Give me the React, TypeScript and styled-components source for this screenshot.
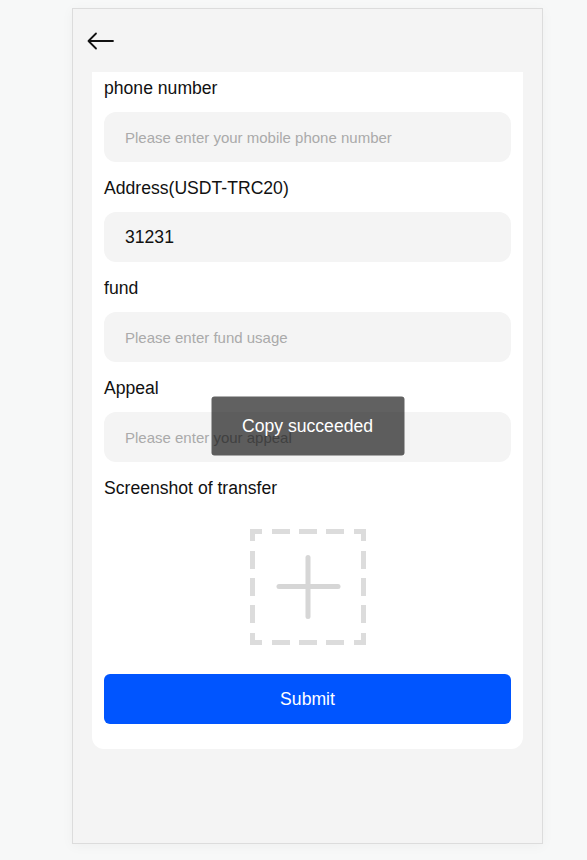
import React from "react";
import styled, { createGlobalStyle } from "styled-components";

const Global = createGlobalStyle`
  html, body {
    margin: 0;
    padding: 0;
    background: #f7f8f8;
    font-family: "Liberation Sans", Arial, sans-serif;
  }
  * { box-sizing: border-box; }
`;

const Page = styled.div`
  padding: 8px 0 16px 72px;
`;

const Frame = styled.div`
  position: relative;
  width: 471px;
  height: 836px;
  background: #f4f4f4;
  border: 1px solid #dcdcdc;
  box-shadow: 0 2px 12px rgba(0, 0, 0, 0.04);
  display: flex;
  flex-direction: column;
`;

const Header = styled.div`
  height: 63px;
  display: flex;
  align-items: center;
  padding-left: 13px;
  padding-top: 1px;
`;

const BackButton = styled.button`
  border: 0;
  background: transparent;
  padding: 0;
  width: 28px;
  height: 20px;
  display: flex;
  align-items: center;
  cursor: pointer;
`;

const Card = styled.div`
  margin: 0 19px 0 19px;
  background: #ffffff;
  border-radius: 0 0 12px 12px;
  padding: 0 12px 25px 12px;
  display: flex;
  flex-direction: column;
`;

const Label = styled.div`
  font-size: 17.6px;
  line-height: 30px;
  padding-top: 1px;
  height: 30px;
  color: #111;
  margin-bottom: 10px;
`;

const Field = styled.input`
  height: 50px;
  border: 0;
  outline: none;
  border-radius: 12px;
  background: #f4f4f4;
  padding: 0 21px;
  font-family: "Liberation Sans", Arial, sans-serif;
  font-size: 17.6px;
  color: #111;
  margin-bottom: 10px;
  width: 100%;
  &::placeholder {
    color: #aaaaaa;
    font-size: 15px;
  }
`;

const UploadArea = styled.div`
  display: flex;
  justify-content: center;
  padding-top: 17px;
  margin-bottom: 29px;
`;

const UploadBox = styled.div`
  width: 116px;
  height: 116px;
  cursor: pointer;
`;

const SubmitButton = styled.button`
  height: 50px;
  border: 0;
  border-radius: 6px;
  background: #0055ff;
  color: #ffffff;
  font-family: "Liberation Sans", Arial, sans-serif;
  font-size: 17.6px;
  cursor: pointer;
`;

const Toast = styled.div`
  position: absolute;
  left: 50%;
  top: 50%;
  transform: translate(-50%, -50%);
  width: 193px;
  height: 59px;
  border-radius: 3px;
  background: rgba(0, 0, 0, 0.62);
  color: #fff;
  font-size: 17.6px;
  display: flex;
  align-items: center;
  justify-content: center;
`;

const BackArrow = () => (
  <svg width="28" height="20" viewBox="0 0 28 20" fill="none">
    <path d="M27 10H2.5M10 2.5L2.5 10L10 17.5" stroke="#111" strokeWidth="1.8" strokeLinecap="round" strokeLinejoin="round" />
  </svg>
);

const dash = "12 10 18 9 18 9 18 10 12";

const UploadIcon = () => (
  <svg width="116" height="116" viewBox="0 0 116 116" fill="none">
    <g stroke="#dcdcdc" strokeWidth="5" strokeDasharray={dash}>
      <line x1="0" y1="2.5" x2="116" y2="2.5" />
      <line x1="0" y1="113.5" x2="116" y2="113.5" />
      <line x1="2.5" y1="0" x2="2.5" y2="116" />
      <line x1="113.5" y1="0" x2="113.5" y2="116" />
    </g>
    <g stroke="#d6d6d6" strokeWidth="5" strokeLinecap="round">
      <line x1="58" y1="28.5" x2="58" y2="87.5" />
      <line x1="29" y1="57.5" x2="88" y2="57.5" />
    </g>
  </svg>
);

const fields = [
  { label: "phone number", placeholder: "Please enter your mobile phone number", value: "" },
  { label: "Address(USDT-TRC20)", placeholder: "", value: "31231" },
  { label: "fund", placeholder: "Please enter fund usage", value: "" },
  { label: "Appeal", placeholder: "Please enter your appeal", value: "" },
];

export default function App() {
  return (
    <Page>
      <Global />
      <Frame>
        <Header>
          <BackButton aria-label="back">
            <BackArrow />
          </BackButton>
        </Header>
        <Card>
          {fields.map((f) => (
            <React.Fragment key={f.label}>
              <Label>{f.label}</Label>
              <Field placeholder={f.placeholder} defaultValue={f.value} />
            </React.Fragment>
          ))}
          <Label>Screenshot of transfer</Label>
          <UploadArea>
            <UploadBox>
              <UploadIcon />
            </UploadBox>
          </UploadArea>
          <SubmitButton>Submit</SubmitButton>
        </Card>
        <Toast>Copy succeeded</Toast>
      </Frame>
    </Page>
  );
}
